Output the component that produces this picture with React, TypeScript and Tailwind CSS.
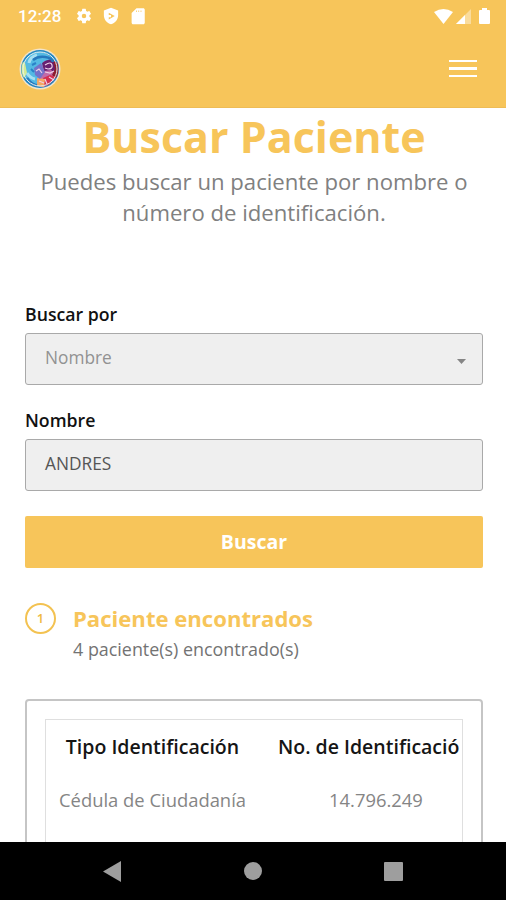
import type { ReactNode } from "react";

const patients = [{ type: "Cédula de Ciudadanía", id: "14.796.249" }];

function StatusBar() {
	return (
		<div className="flex h-8 items-center justify-between pl-[18px] pr-[16px] text-white">
			<div className="flex items-center">
				<span className="w-[57px] font-[Roboto] text-[17px] font-medium leading-8 tracking-[0.1px]">12:28</span>
				<svg className="size-[18px]" viewBox="0 0 24 24" fill="currentColor">
					<path d="M19.14 12.94c.04-.3.06-.61.06-.94s-.02-.64-.07-.94l2.03-1.58a.49.49 0 0 0 .12-.61l-1.92-3.32a.49.49 0 0 0-.59-.22l-2.39.96a7 7 0 0 0-1.62-.94l-.36-2.54a.48.48 0 0 0-.48-.41h-3.84a.47.47 0 0 0-.47.41l-.36 2.54c-.59.24-1.13.57-1.62.94l-2.39-.96a.48.48 0 0 0-.59.22L2.74 8.87a.47.47 0 0 0 .12.61l2.03 1.58c-.05.3-.09.63-.09.94s.02.64.07.94l-2.03 1.58a.49.49 0 0 0-.12.61l1.92 3.32c.12.22.37.29.59.22l2.39-.96c.5.38 1.03.7 1.62.94l.36 2.54c.05.24.24.41.48.41h3.84c.24 0 .44-.17.47-.41l.36-2.54c.59-.24 1.13-.56 1.62-.94l2.39.96c.22.08.47 0 .59-.22l1.92-3.32a.47.47 0 0 0-.12-.61zM12 15a3 3 0 1 1 0-6 3 3 0 0 1 0 6z" />
				</svg>
				<svg className="ml-[9px] size-[18px]" viewBox="0 0 24 24" fill="currentColor">
					<path fillRule="evenodd" d="M12 1 2.5 4.5V11c0 5.6 4 10.5 9.5 12 5.5-1.5 9.5-6.4 9.5-12V4.5zM9 7.5 17 12l-8 4.5v-3h3v-3H9z" />
				</svg>
				<svg className="ml-[9px] size-[18px]" viewBox="0 0 24 24" fill="currentColor">
					<path fillRule="evenodd" d="M19 1.5H10L3.5 8v13c0 1.1.9 2 2 2H19c1.100 0 2-.9 2-2V3.500c0-1.100-.9-2-2-2zM9.500 4.500h1v2h-1zm3 0h1v2h-1zm3 0h1v2h-1z" />
				</svg>
			</div>
			<div className="flex items-center">
				<svg className="h-[15px] w-[19px]" viewBox="0 0 19 15" fill="currentColor">
					<path d="M0 3Q9.500-3 19 3L9.500 15z" />
				</svg>
				<svg className="ml-[3px] h-[15px] w-[15px]" viewBox="0 0 15 15" fill="currentColor">
					<path d="M15 0v15H0z" opacity="0.4" />
					<path d="M9 6v9H0z" />
				</svg>
				<svg className="ml-[8px] h-4 w-[11px]" viewBox="0 0 11 16" fill="currentColor">
					<path d="M3 0h5v2h2q1 0 1 1v12q0 1-1 1H1q-1 0-1-1V3q0-1 1-1h2z" />
				</svg>
			</div>
		</div>
	);
}

function Logo() {
	return (
		<svg className="size-[42px]" viewBox="0 0 42 42" fill="none">
			<defs>
				<clipPath id="disc">
					<circle cx="21" cy="21" r="18.500" />
				</clipPath>
			</defs>
			<circle cx="21" cy="21" r="20.500" fill="#f1e4cb" />
			<circle cx="21" cy="21" r="19" fill="#2289c4" />
			<g clipPath="url(#disc)">
				<circle cx="20" cy="20" r="16" fill="#54b9e3" />
				<path d="M0 12l6 3 2 10-3 5-5-2z" fill="#d3eb95" />
				<path d="M25 13l15 1v11l-6 8-10 7-5-3 1-9z" fill="#c26aa8" />
				<path d="M23 15q8-7 15 0v12l-6-5-7 1z" fill="#672070" />
				<path d="M34 12l6 4-1 16-6-5 3-6z" fill="#8d1d2e" />
				<path d="M24 30l7-3 6 2-7 8-6 1z" fill="#d32f50" />
				<path d="M18 30l8 1-1 8-7-1z" fill="#f4a763" />
				<path d="M15 20l7-5 4 9-5 7-5-4z" fill="#7472c9" />
				<path d="M10 15q1-6 8-8M8 25q3 5 8 6" stroke="#a5dff2" strokeWidth="3" />
				<path d="M8 30q4 6 10 8M14 12q5-4 12-3t8 5" stroke="#2578bd" strokeWidth="2.500" />
				<path d="M13 17l4-2M12 21l3 3" stroke="#2b82c8" strokeWidth="2" />
				<path d="M26 17q6-4 7 0t-4 4l-3-1M17 23l3-2 3 4M26 24l5 1 4-2M30 29l5 3M20 33l5 2M26 31l2 5" stroke="#ecd0e6" strokeWidth="1.200" />
				<circle cx="21" cy="21" r="17" stroke="#e9f1ee" strokeWidth="1" />
			</g>
		</svg>
	);
}

function Field({ label, children }: { label: string; children: ReactNode }) {
	return (
		<div>
			<div className="h-[29px] text-[17.7px] font-semibold leading-[20px] text-[#111]">{label}</div>
			<div className="flex h-[52px] items-center justify-between rounded-[3px] border-[1.500px] border-[#a9a9a9] bg-[#efefef] pb-[3px] pl-[19px] pr-4 text-[17.3px]">
				{children}
			</div>
		</div>
	);
}

export default function App() {
	return (
		<div className="flex h-[900px] w-[506px] flex-col overflow-hidden bg-white font-['Open_Sans','Noto_Sans',sans-serif]">
			<header className="h-[108px] shrink-0 border-b border-[#eebc56] bg-[#f7c55a]">
				<StatusBar />
				<div className="flex h-[73px] items-center justify-between pl-[19px] pr-[29px]">
					<Logo />
					<div className="flex w-7 flex-col gap-[5px]">
						<span className="h-[2.500px] bg-white" />
						<span className="h-[2.500px] bg-white" />
						<span className="h-[2.500px] bg-white" />
					</div>
				</div>
			</header>

			<main className="min-h-0 flex-1 overflow-hidden pl-[25px] pr-[23px]">
				<h1 className="mt-[6px] h-[52px] whitespace-nowrap text-center text-[43px] font-bold leading-[46px] text-[#f7c55a]">
					Buscar Paciente
				</h1>
				<p className="h-[138px] whitespace-nowrap text-center text-[22.150px] leading-[31px] text-[#808080]">
					Puedes buscar un paciente por nombre o<br />
					número de identificación.
				</p>

				<div className="flex flex-col gap-[25px]">
					<Field label="Buscar por">
						<span className="text-[#929292]">Nombre</span>
						<svg className="mt-[7px] h-[5px] w-[9px]" viewBox="0 0 9 5" fill="#858585">
							<path d="M0 0h9L4.500 5z" />
						</svg>
					</Field>
					<Field label="Nombre">
						<span className="text-[#555]">ANDRES</span>
					</Field>
					<button className="h-[52px] rounded-[2px] bg-[#f7c55a] text-[19.500px] font-bold text-white">Buscar</button>
				</div>

				<section className="mt-[35px] flex h-[96px] gap-[17px]">
					<div className="flex size-[31px] shrink-0 items-center justify-center rounded-full border-2 border-[#f3c251] text-[13px] font-semibold text-[#efba40]">
						1
					</div>
					<div>
						<h2 className="text-[22.100px] font-bold leading-[31px] text-[#f7c55a]">Paciente encontrados</h2>
						<p className="text-[17.900px] leading-[30px] text-[#737373]">4 paciente(s) encontrado(s)</p>
					</div>
				</section>

				<div className="h-[300px] rounded-[4px] border-2 border-[#c5c5c5] p-[18px]">
					<div className="h-full overflow-hidden border border-[#dfdfdf]">
						<table className="w-[640px] table-fixed text-center">
							<thead>
								<tr className="h-[53px] text-[19.500px] text-[#151515]">
									<th className="w-[213px] font-semibold">Tipo Identificación</th>
									<th className="w-[234px] whitespace-nowrap pl-[19px] text-left font-semibold">No. de Identificació</th>
									<th />
								</tr>
							</thead>
							<tbody>
								{patients.map((patient) => (
									<tr key={patient.id} className="h-[53px] text-[18.400px] text-[#858585]">
										<td>{patient.type}</td>
										<td>{patient.id}</td>
										<td />
									</tr>
								))}
							</tbody>
						</table>
					</div>
				</div>
			</main>

			<nav className="flex h-[58px] shrink-0 items-center justify-between bg-black pl-[103px] pr-[103px]">
				<svg className="h-[21px] w-[18px]" viewBox="0 0 18 21" fill="#9e9e9e">
					<path d="M18 0v21L0 10.500z" />
				</svg>
				<span className="size-[18px] rounded-full bg-[#9e9e9e]" />
				<span className="size-[19px] rounded-[1px] bg-[#9e9e9e]" />
			</nav>
		</div>
	);
}
